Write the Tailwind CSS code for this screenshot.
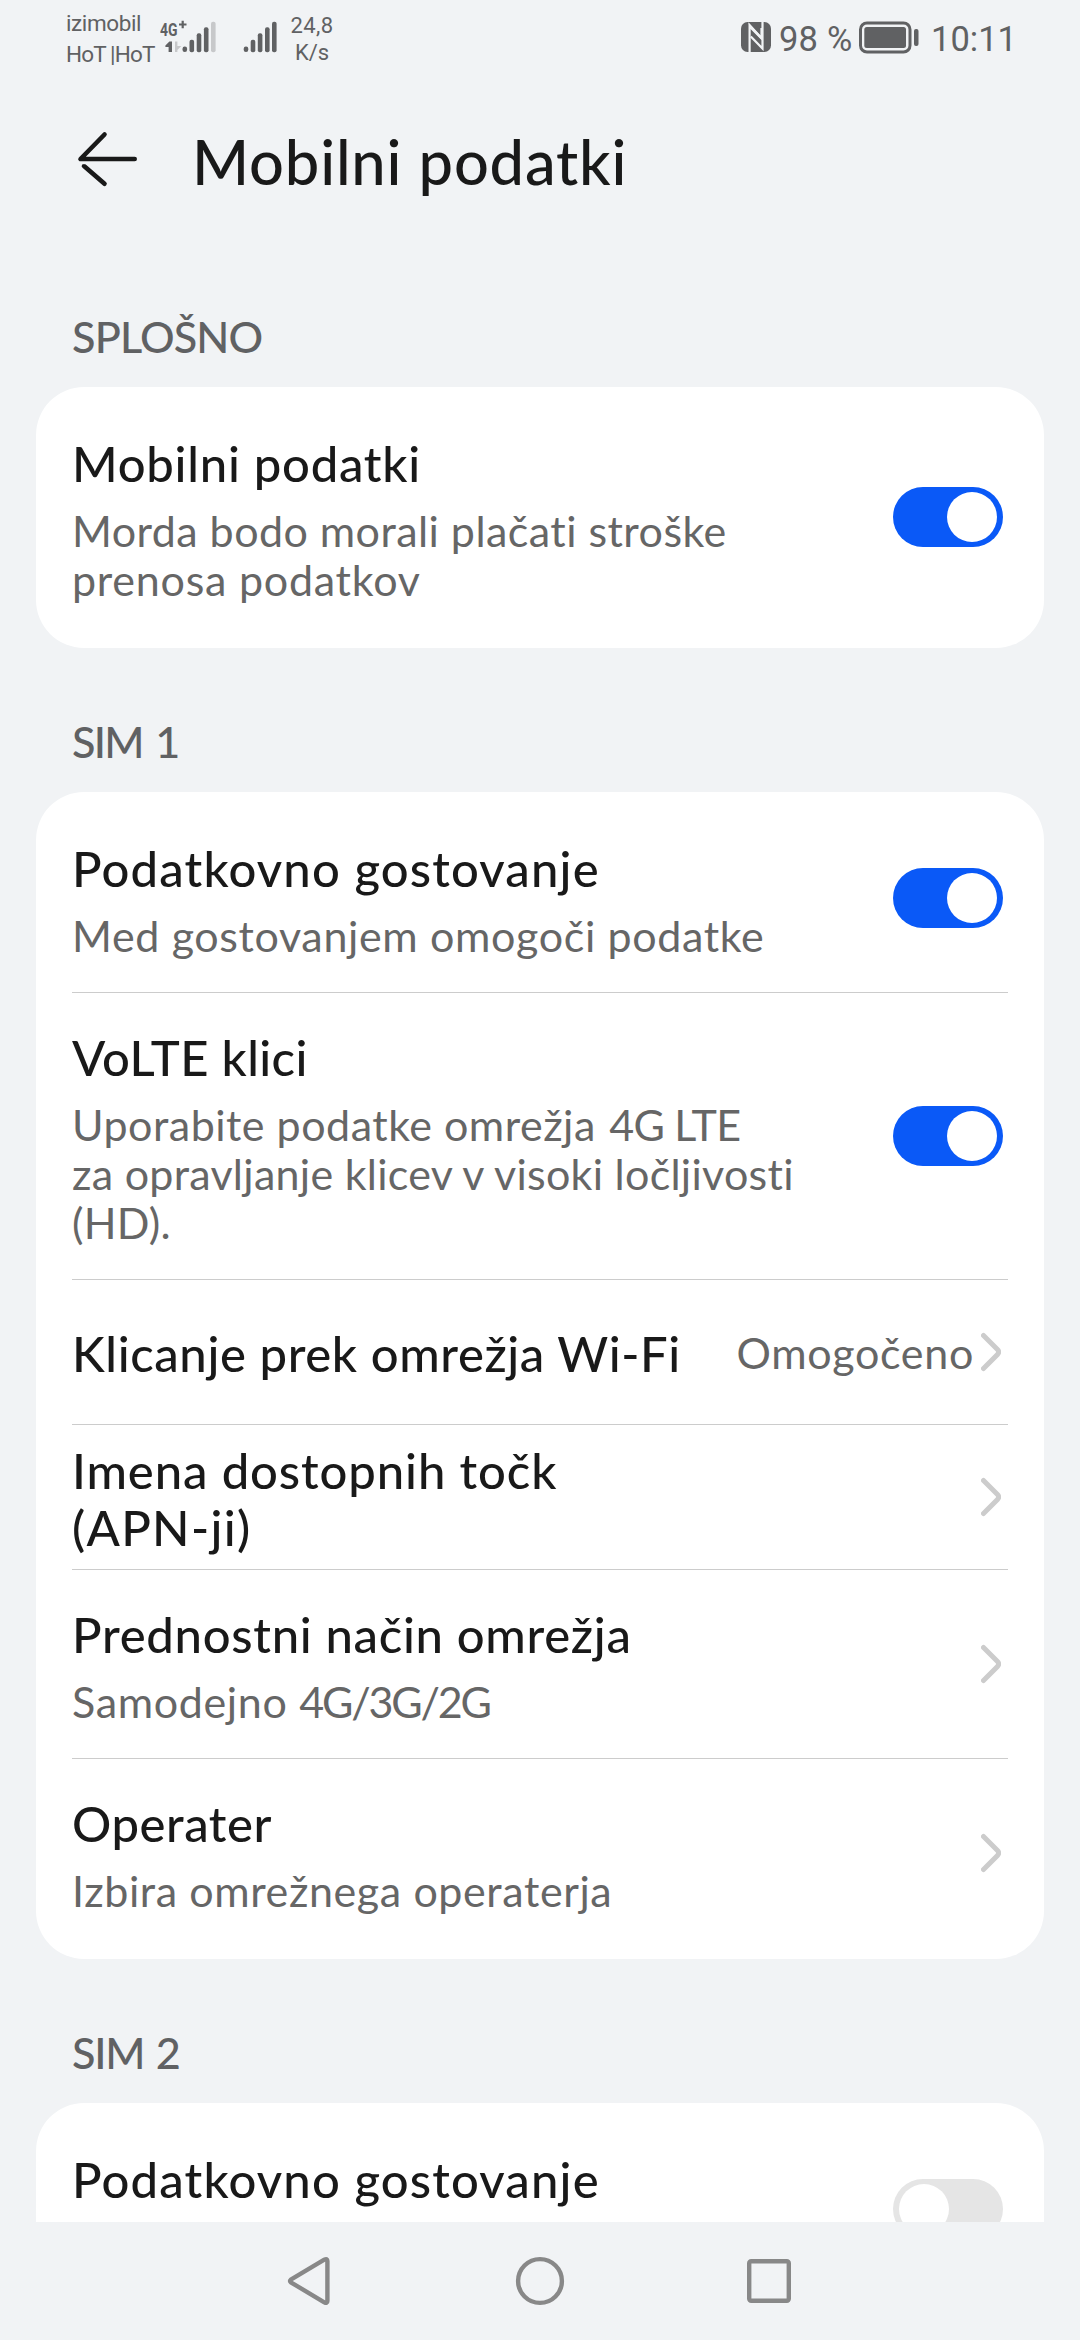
<!DOCTYPE html>
<html lang="sl">
<head>
<meta charset="utf-8">
<title>Mobilni podatki</title>
<script src="https://cdn.jsdelivr.net/npm/@tailwindcss/browser@4"></script>
</head>
<body class="bg-[#f1f3f5]">
<div class="flex h-[2340px] w-[1080px] flex-col overflow-hidden bg-[#f1f3f5] font-['Lato','Noto_Sans',sans-serif] text-[#191919]">

  <!-- Status bar -->
  <header class="flex h-20 shrink-0 items-start whitespace-nowrap pl-[66px] font-['Roboto',sans-serif] text-[#606163]">
    <div class="w-[94px] pt-[7.5px] text-[22.5px] leading-[31.5px]">
      <div class="tracking-[-0.4px]">izimobil</div>
      <div class="tracking-[-0.85px]">HoT |HoT</div>
    </div>
    <svg class="h-20 w-[120px] shrink-0" viewBox="160 0 120 80" fill="#606163">
      <text x="160" y="36" font-family="Roboto" font-weight="700" font-size="18.5" textLength="17.5" lengthAdjust="spacingAndGlyphs">4G</text>
      <path d="M179 24.5h7.5M182.7 20.8v7.5" stroke="#606163" stroke-width="2.2"/>
      <path d="M172 41.5V52h-3.4v-5h-3.200v-1.500l4-4z"/>
      <path d="M175 41.500h2.400v4.500h4l-4 4v2H175z" fill="#c7c8ca"/>
      <rect x="182.500" y="46.500" width="4.600" height="5.500" rx="2.200"/>
      <rect x="189.500" y="39.800" width="4.600" height="12.400" rx="2"/>
      <rect x="196.700" y="33.300" width="4.600" height="18.900" rx="2"/>
      <rect x="203.900" y="27.300" width="4.600" height="24.900" rx="2"/>
      <rect x="211" y="21.800" width="4.600" height="30.400" rx="2" fill="#c7c8ca"/>
      <rect x="243.700" y="46.500" width="4.600" height="5.500" rx="2.200"/>
      <rect x="250.700" y="39.800" width="4.600" height="12.400" rx="2"/>
      <rect x="257.800" y="33.300" width="4.600" height="18.900" rx="2"/>
      <rect x="265" y="27.300" width="4.600" height="24.900" rx="2"/>
      <rect x="272" y="21.800" width="4.600" height="30.400" rx="2"/>
    </svg>
    <div class="ml-2 w-12 pt-[11.500px] text-center text-[22px] leading-[27.300px]">
      <div class="tracking-[0.400px]">24,8</div>
      <div>K/s</div>
    </div>
    <svg class="ml-[405px] h-20 w-[30px] shrink-0" viewBox="0 0 30 80">
      <rect y="22" width="30" height="30" rx="6.500" fill="#606163"/>
      <path d="M8.600 52V25.200L20.500 38.200V28" fill="none" stroke="#f1f3f5" stroke-width="2.200"/>
      <path d="M9.800 36.500L21.500 48.500V22" fill="none" stroke="#f1f3f5" stroke-width="2.200"/>
      <path d="M7.500 23L20.500 36.500V40L9 28.500z" fill="#f1f3f5"/>
    </svg>
    <span class="ml-2 w-20 pt-[19px] text-[34.500px] leading-10 tracking-[0.200px]">98 %</span>
    <svg class="h-20 w-[60px] shrink-0" viewBox="0 0 60 80">
      <rect x="1.500" y="23" width="49.500" height="29" rx="6.500" fill="none" stroke="#606163" stroke-width="3"/>
      <rect x="5.300" y="27" width="41.700" height="21" rx="2.500" fill="#606163"/>
      <rect x="55" y="29" width="4.500" height="17" rx="2" fill="#606163"/>
    </svg>
    <span class="ml-3 pt-[19px] text-[34.500px] leading-10">10:11</span>
  </header>

  <!-- App bar -->
  <div class="flex h-[163px] shrink-0 items-start pl-[76px]">
    <svg class="mt-[50px] h-[60px] w-[64px]" viewBox="76 130 64 60" fill="none" stroke="#191919" stroke-width="4.600" stroke-linecap="round" stroke-linejoin="round">
      <path d="M104.500 134.500L80.500 159H134.700"/>
      <path d="M84 166L104.500 183.700"/>
      <path d="M81 163.200H90" stroke="#f1f3f5" stroke-width="2" stroke-linecap="butt"/>
    </svg>
    <h1 class="mt-[45px] ml-[52px] text-[61.400px] leading-[72px] font-medium tracking-[0.800px]">Mobilni podatki</h1>
  </div>

  <!-- Scrollable settings list -->
  <main class="h-[1979px] shrink-0 overflow-hidden px-9">
    <h2 class="h-[144px] pt-[69px] pl-9 text-[43.200px] leading-[49px] font-medium tracking-[-0.860px] text-[#606163]">SPLOŠNO</h2>
    <section class="rounded-[48px] bg-white px-9 py-3">
      <div class="flex h-[237px] items-center">
        <div class="flex-1 self-start whitespace-nowrap pt-9">
          <div class="text-[49px] leading-[57px] font-medium tracking-[0.750px]">Mobilni podatki</div>
          <div class="mt-3.5 text-[43px] leading-[49px] text-[#666]"><div class="tracking-[0.450px]">Morda bodo morali plačati stroške</div><div class="tracking-[0.750px]">prenosa podatkov</div></div>
        </div>
        <div class="mr-[5px] mb-px flex h-[60px] w-[110px] items-center justify-end rounded-full bg-[#0a59f7] px-1.5"><div class="size-[50px] rounded-full bg-white"></div></div>
      </div>
    </section>

    <h2 class="h-[144px] pt-[69px] pl-9 text-[43.200px] leading-[49px] font-medium tracking-[-1.700px] text-[#606163] [word-spacing:3px]">SIM 1</h2>
    <section class="rounded-[48px] bg-white px-9 py-3">
      <div class="flex h-[189px] items-center border-b border-[#ccc]">
        <div class="flex-1 self-start whitespace-nowrap pt-9">
          <div class="text-[49px] leading-[57px] font-medium tracking-[1.150px]">Podatkovno gostovanje</div>
          <div class="mt-3.5 text-[43px] leading-[49px] tracking-[0.650px] text-[#666]">Med gostovanjem omogoči podatke</div>
        </div>
        <div class="mr-[5px] flex h-[60px] w-[110px] items-center justify-end rounded-full bg-[#0a59f7] px-1.5"><div class="size-[50px] rounded-full bg-white"></div></div>
      </div>
      <div class="flex h-[287px] items-center border-b border-[#ccc]">
        <div class="flex-1 self-start whitespace-nowrap pt-9">
          <div class="text-[49px] leading-[57px] font-medium tracking-[0.400px]">VoLTE klici</div>
          <div class="mt-3.5 text-[43px] leading-[49px] text-[#666]"><div class="tracking-[0.500px]">Uporabite podatke omrežja <span class="tracking-[-0.800px]"><span class="pl-[2px]">4G</span> LTE</span></div><div class="tracking-[0.270px]">za opravljanje klicev v visoki ločljivosti</div><div class="tracking-[0.200px]">(HD).</div></div>
        </div>
        <div class="mr-[5px] flex h-[60px] w-[110px] items-center justify-end rounded-full bg-[#0a59f7] px-1.5"><div class="size-[50px] rounded-full bg-white"></div></div>
      </div>
      <div class="flex h-[145px] items-center border-b border-[#ccc]">
        <div class="flex-1 whitespace-nowrap pt-0.5 text-[49px] leading-[57px] font-medium tracking-[0.610px]">Klicanje prek omrežja Wi-Fi</div>
        <div class="mr-[7px] pt-px text-[43px] leading-[49px] tracking-[0.700px] text-[#666]">Omogočeno</div>
        <svg class="mr-[7px] h-10 w-5" viewBox="0 0 20 40" fill="none" stroke="#ccc" stroke-width="5" stroke-linecap="round" stroke-linejoin="round"><path d="M2.500 3.500L16.500 17.600Q18.800 20 16.500 22.400L2.500 36.500"/></svg>
      </div>
      <div class="flex h-[145px] items-center border-b border-[#ccc]">
        <div class="flex-1 whitespace-nowrap pt-[3px] text-[49px] leading-[57px] font-medium"><div class="tracking-[0.900px]">Imena dostopnih točk</div><div class="tracking-[1.300px]">(APN-ji)</div></div>
        <svg class="mr-[7px] h-10 w-5" viewBox="0 0 20 40" fill="none" stroke="#ccc" stroke-width="5" stroke-linecap="round" stroke-linejoin="round"><path d="M2.500 3.500L16.500 17.600Q18.800 20 16.500 22.400L2.500 36.500"/></svg>
      </div>
      <div class="flex h-[189px] items-center border-b border-[#ccc]">
        <div class="flex-1 self-start whitespace-nowrap pt-9">
          <div class="text-[49px] leading-[57px] font-medium tracking-[0.700px]">Prednostni način omrežja</div>
          <div class="mt-3.5 text-[43px] leading-[49px] text-[#666]"><span class="tracking-[0.650px]">Samodejno </span><span class="tracking-[-2.150px]">4G/3G/2G</span></div>
        </div>
        <svg class="mr-[7px] h-10 w-5" viewBox="0 0 20 40" fill="none" stroke="#ccc" stroke-width="5" stroke-linecap="round" stroke-linejoin="round"><path d="M2.500 3.500L16.500 17.600Q18.800 20 16.500 22.400L2.500 36.500"/></svg>
      </div>
      <div class="flex h-[188px] items-center">
        <div class="flex-1 self-start whitespace-nowrap pt-9">
          <div class="text-[49px] leading-[57px] font-medium tracking-[0.550px]">Operater</div>
          <div class="mt-3.5 text-[43px] leading-[49px] tracking-[0.600px] text-[#666]">Izbira omrežnega operaterja</div>
        </div>
        <svg class="mr-[7px] h-10 w-5" viewBox="0 0 20 40" fill="none" stroke="#ccc" stroke-width="5" stroke-linecap="round" stroke-linejoin="round"><path d="M2.500 3.500L16.500 17.600Q18.800 20 16.500 22.400L2.500 36.500"/></svg>
      </div>
    </section>

    <h2 class="h-[144px] pt-[69px] pl-9 text-[43.200px] leading-[49px] font-medium tracking-[-1.300px] text-[#606163] [word-spacing:2px]">SIM 2</h2>
    <section class="rounded-t-[48px] bg-white px-9 py-3">
      <div class="flex h-[189px] items-center">
        <div class="flex-1 self-start whitespace-nowrap pt-9 text-[49px] leading-[57px] font-medium tracking-[1.150px]">Podatkovno gostovanje</div>
        <div class="mr-[5px] mb-px flex h-[60px] w-[110px] items-center rounded-full bg-[#e5e5e5] px-1.5"><div class="size-[50px] rounded-full bg-white"></div></div>
      </div>
    </section>
  </main>

  <!-- System navigation -->
  <nav class="flex h-[118px] shrink-0 items-center pl-[286px]">
    <svg class="h-[52px] w-[46px]" viewBox="0 0 46 52" fill="none" stroke="#888" stroke-width="4.400" stroke-linejoin="round"><path d="M4.800 24.700Q3.200 26 4.800 27.300L38.300 47.300Q41.400 49 41.400 46V6Q41.400 3 38.300 4.700z"/></svg>
    <svg class="ml-[182px] size-[52px]" viewBox="0 0 52 52" fill="none" stroke="#888" stroke-width="4.400"><circle cx="26" cy="26" r="21.900"/></svg>
    <svg class="ml-[179px] size-[48px]" viewBox="0 0 48 48" fill="none" stroke="#888" stroke-width="4.400"><rect x="4.200" y="4.200" width="39.600" height="39.600" rx="2"/></svg>
  </nav>
</div>
</body>
</html>
